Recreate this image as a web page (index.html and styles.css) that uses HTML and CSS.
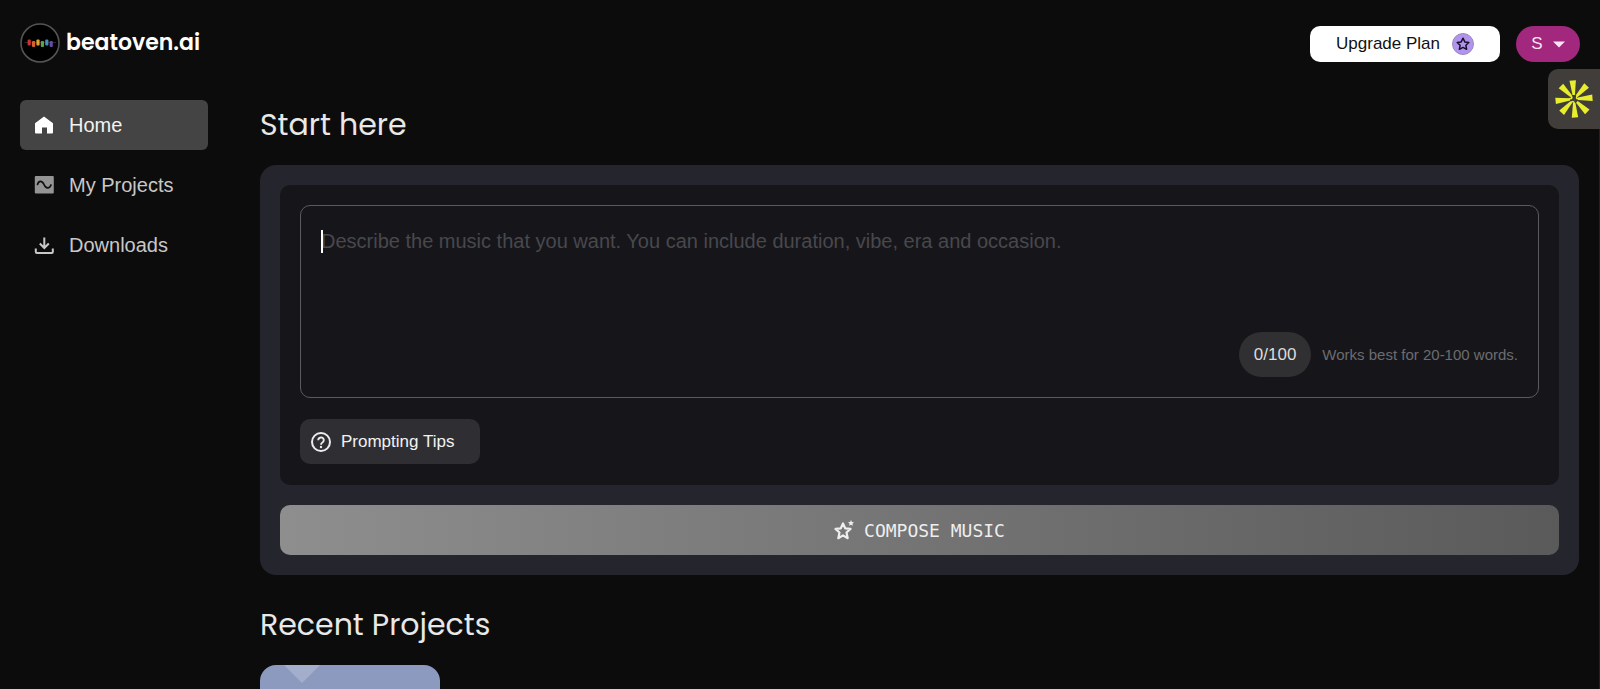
FILE: index.html
```html
<!DOCTYPE html>
<html lang="en">
<head>
  <meta charset="UTF-8">
  <meta name="viewport" content="width=device-width, initial-scale=1.0">
  <title>Beatoven.ai</title>
  <link rel="stylesheet" href="styles.css">
</head>
<body>

  <!-- TOP BAR -->
  <header class="topbar">
    <a class="brand" href="#">
      <svg class="brand-logo" viewBox="0 0 40 40" aria-hidden="true">
        <circle cx="20" cy="20" r="19" fill="#000" stroke="#555" stroke-width="1.6"/>
        <path d="M4.500 19.500H36" stroke="#4a2a30" stroke-width=".8"/>
        <rect x="7.600" y="16.500" width="3.200" height="6" rx="1" fill="#c8322f"/>
        <rect x="12" y="18" width="3.200" height="6" rx="1" fill="#d8622c"/>
        <rect x="16.400" y="16.500" width="3.200" height="6" rx="1" fill="#e0a430"/>
        <rect x="20.800" y="18" width="3.200" height="6" rx="1" fill="#58a64a"/>
        <rect x="25.200" y="16.500" width="3.200" height="6" rx="1" fill="#3a96b8"/>
        <rect x="29.600" y="18" width="3.200" height="6" rx="1" fill="#6a48a8"/>
      </svg>
      <span class="brand-name">beatoven.ai</span>
    </a>
    <div class="topbar-actions">
      <button class="upgrade" type="button">
        Upgrade Plan
        <svg class="upgrade-icon" viewBox="0 0 22 22" aria-hidden="true">
          <circle cx="11" cy="11" r="10.500" fill="#b294ee" stroke="#9a8ab8"/>
          <path d="M11 5.200l1.800 3.700 4 .6-2.900 2.800.7 4-3.600-1.900-3.600 1.900.7-4-2.900-2.800 4-.6z" fill="none" stroke="#17102a" stroke-width="1.500" stroke-linejoin="round"/>
        </svg>
      </button>
      <button class="account" type="button">
        S
        <svg class="account-caret" viewBox="0 0 12 7" aria-hidden="true"><path d="M0 .5h12L6 6.500z" fill="#fbe3f4"/></svg>
      </button>
    </div>
  </header>

  <div class="layout">
    <!-- SIDEBAR -->
    <nav class="sidebar">
      <a class="nav-link active" href="#">
        <svg class="nav-icon" viewBox="0 0 20 20" aria-hidden="true"><path d="M1 8.200 10 1.500l9 6.700V17.500q0 1-1 1h-5v-6H8v6H2q-1 0-1-1z" fill="#fff"/></svg>
        Home
      </a>
      <a class="nav-link" href="#">
        <svg class="nav-icon" viewBox="0 0 20 20" aria-hidden="true">
          <rect x=".8" y="1" width="19" height="17.500" rx="1" fill="#949494"/>
          <path d="M3.500 9.500C4.500 5.500 8 5 10 9.500S15.500 14 17 10" fill="none" stroke="#111" stroke-width="1.700" stroke-linecap="round"/>
        </svg>
        My Projects
      </a>
      <a class="nav-link" href="#">
        <svg class="nav-icon" viewBox="0 0 20 20" aria-hidden="true">
          <path d="M10.300 2.500v10M5.800 8.500l4.500 4.500 4.500-4.500M1.800 13.500V17q0 1 1 1h15q1 0 1-1V13.500" fill="none" stroke="#c8c8c8" stroke-width="2"/>
        </svg>
        Downloads
      </a>
    </nav>

    <!-- MAIN -->
    <main class="content">
      <h1 class="section-title">Start here</h1>

      <form class="composer">
        <div class="prompt-panel">
          <div class="prompt-box">
            <textarea class="prompt-input" aria-label="Describe your music" placeholder="Describe the music that you want. You can include duration, vibe, era and occasion."></textarea>
            <span class="text-cursor"></span>
            <div class="prompt-footer">
              <span class="counter">0/100</span>
              <span class="hint">Works best for 20-100 words.</span>
            </div>
          </div>
          <button class="tips" type="button">
            <svg class="tips-icon" viewBox="0 0 20 20" aria-hidden="true">
              <circle cx="10" cy="10" r="9" fill="none" stroke="#ececec" stroke-width="2"/>
              <path d="M7.200 8.200a2.800 2.700 0 1 1 4.500 2.100C10.600 11 10 11.500 10 12.700" fill="none" stroke="#ececec" stroke-width="1.900"/>
              <circle cx="10" cy="15" r="1.200" fill="#ececec"/>
            </svg>
            Prompting Tips
          </button>
        </div>
        <button class="compose" type="button">
          <svg class="compose-icon" viewBox="0 0 20 20" aria-hidden="true">
            <path d="M9 3.400l2.200 4.900 5.300.6-4 3.600 1.200 5.700L9 15.400l-4.700 2.800 1.200-5.700-4-3.600 5.300-.6z" fill="none" stroke="#eee" stroke-width="2.200" stroke-linejoin="round"/>
            <path d="M17 0l.9 2 2.100.2-1.600 1.500.5 2.100-1.900-1.100-1.900 1.100.5-2.100L14 2.200l2.100-.2z" fill="#eee"/>
          </svg>
          COMPOSE MUSIC
        </button>
      </form>

      <h2 class="section-title">Recent Projects</h2>
      <a class="project" href="#" aria-label="Open project">
        <svg class="project-art" viewBox="0 0 180 180" aria-hidden="true">
          <rect width="180" height="180" fill="#8c9abf"/>
          <path d="M24 0h36L42 18z" fill="#a3aecd"/>
        </svg>
      </a>
    </main>
  </div>

  <!-- FLOATING WIDGET -->
  <button class="widget" type="button" aria-label="Open assistant">
    <svg class="widget-icon" viewBox="-20 -20 40 40" aria-hidden="true">
      <g fill="#e9ee2c" transform="rotate(-4)">
        <path d="M-3.200-18.500h6.400L1.200-4h-2.400z"/>
        <path d="M-3.200-18.500h6.400L1.200-4h-2.400z" transform="rotate(47)"/>
        <path d="M-3.200-18.500h6.400L1.200-4h-2.400z" transform="rotate(90)"/>
        <path d="M-3.200-18.500h6.400L1.200-4h-2.400z" transform="rotate(138)"/>
        <path d="M-3.200-18.500h6.400L1.200-4h-2.400z" transform="rotate(181)"/>
        <path d="M-3.200-18.500h6.400L1.200-4h-2.400z" transform="rotate(226)"/>
        <path d="M-3.200-18.500h6.400L1.200-4h-2.400z" transform="rotate(268)"/>
        <path d="M-3.200-18.500h6.400L1.200-4h-2.400z" transform="rotate(319)"/>
        <!-- curls that join neighbouring rays near the centre -->
        <g fill="none" stroke="#e9ee2c" stroke-width="1.600" stroke-linecap="round">
          <path d="M-3.500-4Q0-.5-4.500-.5"/>
          <path d="M4-4Q1 0 4.500 0"/>
          <path d="M-4 4Q-.5.500 0 4.500"/>
        </g>
      </g>
    </svg>
  </button>

</body>
</html>
```
FILE: styles.css
```css
* {
  box-sizing: border-box;
}

body {
  display: flex;
  flex-direction: column;
  margin: 0;
  height: 100vh;
  overflow: hidden;
  background: #0c0c0c;
  color: #e8e8e8;
  font-family: "Liberation Sans", Arial, sans-serif;
}

button {
  border: none;
  font-family: inherit;
  cursor: pointer;
}

a {
  color: inherit;
  text-decoration: none;
}

svg {
  display: block;
  flex-shrink: 0;
}

.topbar {
  display: flex;
  justify-content: space-between;
  align-items: center;
  flex-shrink: 0;
  height: 88px;
  padding: 0 20px;
}

.brand {
  display: flex;
  align-items: center;
  gap: 6px;
  padding-bottom: 2px;
}

.brand-logo {
  width: 40px;
  height: 40px;
}

.brand-name {
  font-family: Poppins, "Open Sans", sans-serif;
  font-size: 22px;
  font-weight: 600;
  line-height: 32px;
  color: #fff;
}

.topbar-actions {
  display: flex;
  align-items: center;
  gap: 16px;
}

.upgrade {
  display: flex;
  justify-content: center;
  align-items: center;
  gap: 12px;
  height: 36px;
  padding: 0 26px;
  border-radius: 10px;
  background: #fff;
  color: #111;
  font-size: 17px;
}

.upgrade-icon {
  width: 22px;
  height: 22px;
}

.account {
  display: flex;
  justify-content: center;
  align-items: center;
  gap: 10px;
  width: 64px;
  height: 36px;
  padding: 0;
  border-radius: 18px;
  background: #a1287c;
  color: #fbe3f4;
  font-size: 17px;
}

.account-caret {
  width: 12px;
  height: 7px;
}

.layout {
  display: flex;
  flex: 1;
  gap: 52px;
  min-height: 0;
  overflow: hidden;
  padding: 12px 20px 0;
  border-right: 1px solid #222226;
}

.sidebar {
  display: flex;
  flex-direction: column;
  gap: 10px;
  width: 188px;
  flex-shrink: 0;
}

.nav-link {
  display: flex;
  align-items: center;
  gap: 15px;
  height: 50px;
  padding: 0 14px;
  border-radius: 6px;
  color: #c8c8c8;
  font-size: 20px;
}

.nav-link.active {
  background: #444;
  color: #f2f2f2;
}

.nav-icon {
  width: 20px;
  height: 20px;
}

.content {
  flex: 1;
  min-width: 0;
}

.section-title {
  margin: 0;
  font-family: Poppins, "Open Sans", sans-serif;
  font-size: 30px;
  font-weight: 400;
  line-height: 50px;
}

.composer {
  display: flex;
  flex-direction: column;
  gap: 20px;
  margin: 15px 0 25px;
  padding: 20px;
  border-radius: 16px;
  background: #25262d;
}

.prompt-panel {
  display: flex;
  flex-direction: column;
  align-items: flex-start;
  gap: 21px;
  padding: 20px 20px 21px;
  border-radius: 10px;
  background: #16161a;
}

.prompt-box {
  position: relative;
  width: 100%;
  padding: 19px 20px 20px;
  border: 1px solid #5a5a5f;
  border-radius: 10px;
}

.prompt-input {
  display: block;
  width: 100%;
  height: 107px;
  padding: 0;
  border: none;
  outline: none;
  resize: none;
  background: transparent;
  color: #e8e8e8;
  font-family: inherit;
  font-size: 20px;
  line-height: 32px;
}

.prompt-input::placeholder {
  color: #48484d;
}

.text-cursor {
  position: absolute;
  top: 24px;
  left: 20px;
  width: 2px;
  height: 23px;
  background: #fff;
}

.prompt-footer {
  display: flex;
  justify-content: flex-end;
  align-items: center;
  gap: 11px;
}

.counter {
  padding: 0 15px;
  border-radius: 23px;
  background: #303032;
  color: #dcdcdc;
  font-size: 17px;
  line-height: 45px;
}

.hint {
  color: #6c6c70;
  font-size: 15px;
}

.tips {
  display: flex;
  align-items: center;
  gap: 10px;
  height: 45px;
  padding: 0 26px 0 11px;
  border-radius: 10px;
  background: #2f2f33;
  color: #f2f2f2;
  font-size: 17px;
}

.tips-icon {
  width: 20px;
  height: 20px;
}

.compose {
  display: flex;
  justify-content: center;
  align-items: center;
  gap: 10px;
  height: 50px;
  border-radius: 10px;
  background: linear-gradient(90deg, #8e8e8e, #5a5a5a);
  color: #eee;
  font-family: "DejaVu Sans Mono", monospace;
  font-size: 18px;
}

.compose-icon {
  width: 20px;
  height: 20px;
}

.project {
  display: block;
  width: 180px;
  margin-top: 15px;
  border-radius: 16px;
  overflow: hidden;
}

.widget {
  position: fixed;
  top: 69px;
  right: 0;
  display: flex;
  align-items: center;
  width: 52px;
  height: 60px;
  padding: 0 6px;
  border-radius: 10px 0 0 10px;
  background: #403d3a;
}

.widget-icon {
  width: 40px;
  height: 40px;
}
```
